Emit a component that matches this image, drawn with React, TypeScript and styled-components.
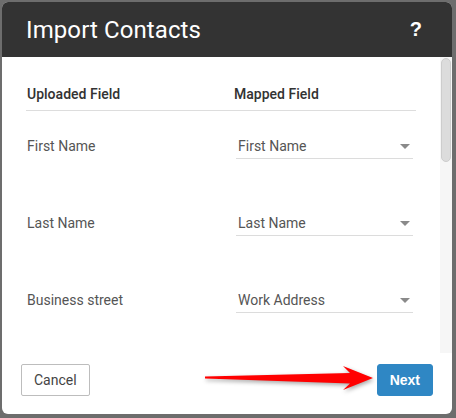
import React from "react";
import styled, { createGlobalStyle } from "styled-components";

const Global = createGlobalStyle`
  html, body { margin: 0; padding: 0; }
  body {
    background: #6d6d6d;
    font-family: Roboto, "Liberation Sans", Arial, sans-serif;
    width: 456px;
    height: 418px;
    overflow: hidden;
  }
`;

const Backdrop = styled.div`
  position: relative;
  width: 456px;
  height: 418px;
  padding: 2px;
  box-sizing: border-box;
`;

const Dialog = styled.div`
  width: 450px;
  height: 412px;
  background: #fff;
  border-radius: 6px;
  display: flex;
  flex-direction: column;
  overflow: hidden;
`;

const Header = styled.div`
  height: 55px;
  flex: none;
  background: #333333;
  display: flex;
  align-items: center;
  justify-content: space-between;
  padding: 0 30px 0 24px;
`;

const Title = styled.h1`
  margin: 0;
  font-size: 24px;
  font-weight: 400;
  color: #fff;
  letter-spacing: 0.1px;
`;

const Help = styled.span`
  font-family: "Liberation Sans", Arial, sans-serif;
  font-size: 20px;
  font-weight: 700;
  color: #fff;
`;

const BodyWrap = styled.div`
  flex: 1;
  display: flex;
  min-height: 0;
`;

const Body = styled.div`
  flex: 1;
  overflow: hidden;
  padding: 0 24px;
`;

const ScrollTrack = styled.div`
  flex: none;
  width: 12px;
  background: #f6f6f6;
  padding-top: 1px;
`;

const ScrollThumb = styled.div`
  height: 104px;
  margin: 0 1px;
  box-sizing: border-box;
  background: #dcdcdc;
  border: 1px solid #cdcdcd;
  border-radius: 5px;
`;

const Columns = styled.div`
  display: grid;
  grid-template-columns: 208px 182px;
  align-items: start;
`;

const HeadRow = styled(Columns)`
  padding: 29px 0 8px;
  border-bottom: 1px solid #dddddd;
`;

const HeadCell = styled.div<{ $shift?: number }>`
  font-family: "Roboto Medium", Roboto, Arial, sans-serif;
  font-size: 14px;
  line-height: 16px;
  font-weight: 500;
  color: #333;
  padding-left: ${(p) => p.$shift ?? 0}px;
`;

const Row = styled(Columns)`
  height: 77px;
  box-sizing: border-box;
  padding-top: 18px;
`;

const Label = styled.div`
  font-size: 14px;
  line-height: 16px;
  color: #555;
  padding: 9px 0 0 1px;
`;

const Select = styled.div`
  margin-left: 2px;
  width: 177px;
  height: 30px;
  box-sizing: border-box;
  padding: 9px 0 0 2px;
  border-bottom: 1px solid #dcdcdc;
  display: flex;
  justify-content: space-between;
  font-size: 14px;
  line-height: 16px;
  color: #555;
`;

const Caret = styled.span`
  width: 0;
  height: 0;
  margin: 6px 3px 0 0;
  border-left: 5px solid transparent;
  border-right: 5px solid transparent;
  border-top: 5px solid #8a8a8a;
`;

const Footer = styled.div`
  flex: none;
  height: 61px;
  box-sizing: border-box;
  padding: 11px 19px 0;
  display: flex;
  justify-content: space-between;
  align-items: flex-start;
`;

const Button = styled.button<{ $primary?: boolean }>`
  height: 32px;
  padding: 0 12px;
  border-radius: ${(p) => (p.$primary ? 3 : 2)}px;
  font-family: ${(p) => (p.$primary ? '"Liberation Sans", Arial, sans-serif' : 'Roboto, Arial, sans-serif')};
  font-size: 14px;
  font-weight: ${(p) => (p.$primary ? 700 : 400)};
  cursor: pointer;
  background: ${(p) => (p.$primary ? "#2f87c4" : "#fff")};
  color: ${(p) => (p.$primary ? "#fff" : "#444")};
  border: 1px solid ${(p) => (p.$primary ? "#2f87c4" : "#bdbdbd")};
`;

const Pointer = styled.svg`
  position: absolute;
  left: 200px;
  top: 360px;
  width: 180px;
  height: 36px;
  overflow: visible;
  filter: drop-shadow(1px 2px 2px rgba(0, 0, 0, 0.35));
`;

const mappings: [string, string][] = [
  ["First Name", "First Name"],
  ["Last Name", "Last Name"],
  ["Business street", "Work Address"],
];

export default function App() {
  return (
    <>
      <Global />
      <Backdrop>
        <Dialog>
          <Header>
            <Title>Import Contacts</Title>
            <Help>?</Help>
          </Header>
          <BodyWrap>
            <Body>
              <HeadRow>
                <HeadCell $shift={1}>Uploaded Field</HeadCell>
                <HeadCell>Mapped Field</HeadCell>
              </HeadRow>
              {mappings.map(([from, to]) => (
                <Row key={from}>
                  <Label>{from}</Label>
                  <Select>
                    {to}
                    <Caret />
                  </Select>
                </Row>
              ))}
            </Body>
            <ScrollTrack>
              <ScrollThumb />
            </ScrollTrack>
          </BodyWrap>
          <Footer>
            <Button>Cancel</Button>
            <Button $primary>Next</Button>
          </Footer>
        </Dialog>
        <Pointer viewBox="0 0 180 36">
          <path
            d="M5 16.6 L150 13 L143 6 L173 18 L143 30 L150 23.5 L5 18.6 Z"
            fill="#ff0000"
          />
        </Pointer>
      </Backdrop>
    </>
  );
}
